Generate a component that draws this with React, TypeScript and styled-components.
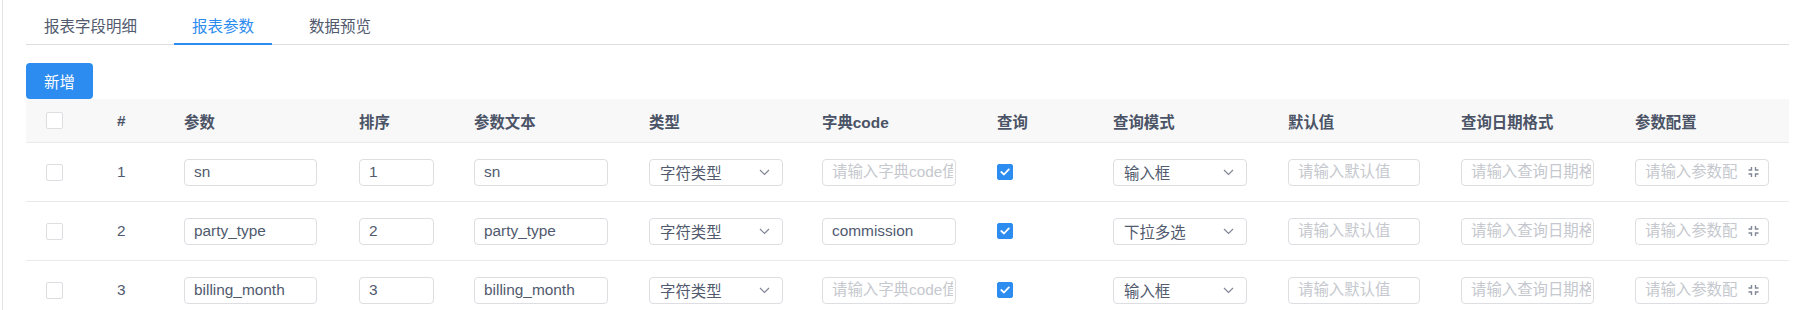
import { FC } from 'react';
import styled, { createGlobalStyle } from 'styled-components';

const GlobalStyle = createGlobalStyle`
  html, body {
    margin: 0;
    padding: 0;
    background: #fff;
  }
  body {
    font-family: "Liberation Sans", "Noto Sans CJK SC", sans-serif;
    font-size: 15.4px;
    color: #515a6e;
  }
  * {
    box-sizing: border-box;
  }
`;

const Page = styled.div`
  padding-left: 2px;
`;

const Panel = styled.div`
  min-height: 310px;
  border-left: 1px solid #e3e4e6;
  padding: 0 25px 0 23px;
`;

const TabNav = styled.div`
  display: flex;
  gap: 19px;
  height: 45px;
  border-bottom: 1px solid #dcdee2;
`;

const TabItem = styled.div<{ $active?: boolean }>`
  position: relative;
  padding: 10px 18px 0;
  line-height: 34px;
  font-size: 15.5px;
  color: ${(p) => (p.$active ? '#2d8cf0' : '#515a6e')};
  cursor: pointer;

  &::after {
    content: '';
    display: ${(p) => (p.$active ? 'block' : 'none')};
    position: absolute;
    left: 0;
    right: 0;
    bottom: -1px;
    height: 2px;
    background: #2d8cf0;
  }
`;

const Toolbar = styled.div`
  padding-top: 18px;
`;

const PrimaryButton = styled.button`
  height: 36px;
  padding: 0 18px;
  border: none;
  border-radius: 4px;
  background: #2d8cf0;
  color: #fff;
  font-family: inherit;
  font-size: 15.4px;
  cursor: pointer;
`;

const COLUMNS = '60px 88px 175px 115px 175px 173px 175px 116px 175px 173px 174px 1fr';

const HeaderRow = styled.div`
  display: grid;
  grid-template-columns: ${COLUMNS};
  height: 44px;
  background: #f8f8f9;
  border-bottom: 1px solid #e8eaec;
`;

const Row = styled.div`
  display: grid;
  grid-template-columns: ${COLUMNS};
  height: 59px;
  border-bottom: 1px solid #e8eaec;
  background: #fff;
`;

const Cell = styled.div<{ $pl?: number }>`
  display: flex;
  align-items: center;
  padding-left: ${(p) => p.$pl ?? 10}px;
  min-width: 0;
`;

const HeadText = styled.span`
  font-weight: 600;
  color: #4b5466;
  white-space: nowrap;
`;

const IndexText = styled.span`
  color: #515a6e;
`;

const CheckBox = styled.span<{ $checked?: boolean }>`
  display: inline-flex;
  align-items: center;
  justify-content: center;
  width: ${(p) => (p.$checked ? 16 : 17)}px;
  height: ${(p) => (p.$checked ? 16 : 17)}px;
  border-radius: 2px;
  border: 1px solid ${(p) => (p.$checked ? '#2d8cf0' : '#dcdee2')};
  background: ${(p) => (p.$checked ? '#2d8cf0' : '#fff')};
`;

const InputBox = styled.div<{ $w?: number }>`
  position: relative;
  display: flex;
  align-items: center;
  width: ${(p) => p.$w ?? 134}px;
  height: 27px;
  border: 1px solid #dcdee2;
  border-radius: 4px;
  background: #fff;
  overflow: hidden;
`;

const Field = styled.input<{ $pr?: number }>`
  width: 100%;
  height: 100%;
  border: none;
  outline: none;
  padding: 0 ${(p) => p.$pr ?? 2}px 0 9px;
  background: transparent;
  font-family: inherit;
  font-size: 15.4px;
  color: #515a6e;

  &::placeholder {
    color: #c5c8ce;
  }
`;

const SelectBox = styled.div`
  display: flex;
  align-items: center;
  justify-content: space-between;
  width: 134px;
  height: 27px;
  padding: 0 12px 0 10px;
  border: 1px solid #dcdee2;
  border-radius: 4px;
  background: #fff;
  color: #515a6e;
`;

const Suffix = styled.span`
  position: absolute;
  right: 9px;
  top: 50%;
  transform: translateY(-50%);
  display: flex;
`;

const Check = () => (
  <svg width="10" height="8" viewBox="0 0 10 8">
    <path d="M1.3 4 L4 6.5 L8.8 1.4" fill="none" stroke="#fff" strokeWidth="1.8" strokeLinecap="round" strokeLinejoin="round" />
  </svg>
);

const Chevron = () => (
  <svg width="11" height="7" viewBox="0 0 11 7">
    <path d="M1 1 L5.5 5.5 L10 1" fill="none" stroke="#808695" strokeWidth="1.2" />
  </svg>
);

const ContractIcon = () => (
  <svg width="11" height="11" viewBox="0 0 11 11">
    <g fill="none" stroke="#808695" strokeWidth="1.4">
      <path d="M3.5 0.5 V3.5 H0.5" />
      <path d="M7.5 0.5 V3.5 H10.5" />
      <path d="M3.5 10.5 V7.5 H0.5" />
      <path d="M7.5 10.5 V7.5 H10.5" />
    </g>
  </svg>
);

interface IParam {
  name: string;
  sort: string;
  text: string;
  dictCode: string;
  mode: string;
}

const params: IParam[] = [
  { name: 'sn', sort: '1', text: 'sn', dictCode: '', mode: '输入框' },
  { name: 'party_type', sort: '2', text: 'party_type', dictCode: 'commission', mode: '下拉多选' },
  { name: 'billing_month', sort: '3', text: 'billing_month', dictCode: '', mode: '输入框' },
];

const headers = ['参数', '排序', '参数文本', '类型', '字典code', '查询', '查询模式', '默认值', '查询日期格式', '参数配置'];

const Select: FC<{ value: string }> = ({ value }) => (
  <SelectBox>
    <span>{value}</span>
    <Chevron />
  </SelectBox>
);

const App: FC = () => {
  return (
    <Page>
      <GlobalStyle />
      <Panel>
        <TabNav>
          <TabItem>报表字段明细</TabItem>
          <TabItem $active>报表参数</TabItem>
          <TabItem>数据预览</TabItem>
        </TabNav>

        <Toolbar>
          <PrimaryButton>新增</PrimaryButton>
        </Toolbar>

        {/* 参数表格 */}
        <HeaderRow>
          <Cell $pl={20}>
            <CheckBox />
          </Cell>
          <Cell $pl={31}>
            <HeadText>#</HeadText>
          </Cell>
          {headers.map((h) => (
            <Cell key={h}>
              <HeadText>{h}</HeadText>
            </Cell>
          ))}
        </HeaderRow>

        {params.map((item, inx) => (
          <Row key={item.name}>
            <Cell $pl={20}>
              <CheckBox />
            </Cell>
            <Cell $pl={31}>
              <IndexText>{inx + 1}</IndexText>
            </Cell>
            <Cell>
              <InputBox $w={133}>
                <Field defaultValue={item.name} />
              </InputBox>
            </Cell>
            <Cell>
              <InputBox $w={75}>
                <Field defaultValue={item.sort} />
              </InputBox>
            </Cell>
            <Cell>
              <InputBox>
                <Field defaultValue={item.text} />
              </InputBox>
            </Cell>
            <Cell>
              <Select value="字符类型" />
            </Cell>
            <Cell>
              <InputBox>
                <Field defaultValue={item.dictCode} placeholder="请输入字典code值" />
              </InputBox>
            </Cell>
            <Cell>
              <CheckBox $checked>
                <Check />
              </CheckBox>
            </Cell>
            <Cell>
              <Select value={item.mode} />
            </Cell>
            <Cell>
              <InputBox $w={132}>
                <Field placeholder="请输入默认值" />
              </InputBox>
            </Cell>
            <Cell>
              <InputBox $w={133}>
                <Field placeholder="请输入查询日期格式" />
              </InputBox>
            </Cell>
            <Cell>
              <InputBox>
                <Field $pr={30} placeholder="请输入参数配置" />
                <Suffix>
                  <ContractIcon />
                </Suffix>
              </InputBox>
            </Cell>
          </Row>
        ))}
      </Panel>
    </Page>
  );
};

export default App;
